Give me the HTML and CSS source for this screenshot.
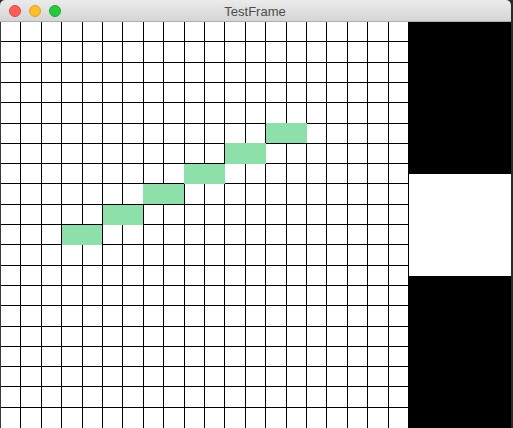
FILE: index.html
```html
<!DOCTYPE html>
<html>
<head>
<meta charset="utf-8">
<link rel="stylesheet" href="styles.css">
</head>
<body>
<div class="window">
  <div class="titlebar">
    <div class="lights">
      <span class="light red"></span>
      <span class="light yellow"></span>
      <span class="light green"></span>
    </div>
    <div class="title">TestFrame</div>
  </div>
  <div class="content">
    <svg class="grid" width="408" height="406" viewBox="0 0 408 406" shape-rendering="crispEdges">
      <rect x="0" y="0" width="408" height="406" fill="#ffffff"/>
      <g id="lines" stroke="#000" stroke-width="1"></g>
      <g fill="#8de0a9">
        <rect x="62" y="203" width="40" height="20"/>
        <rect x="103" y="183" width="40" height="20"/>
        <rect x="143" y="162" width="41" height="20"/>
        <rect x="184" y="142" width="41" height="20"/>
        <rect x="225" y="121" width="41" height="21"/>
        <rect x="266" y="101" width="41" height="20"/>
      </g>
      <line x1="0.5" y1="0" x2="0.5" y2="406" stroke="#3a3a3a"/>
    </svg>
    <div class="side">
      <div class="slot"></div>
    </div>
  </div>
</div>
<script>
(function () {
  var g = document.getElementById('lines');
  var out = '';
  for (var i = 1; i < 20; i++) {
    var x = Math.round(i * 20.4) + 0.5;
    var y = Math.round(i * 20.3) - 0.5;
    out += '<line x1="' + x + '" y1="0" x2="' + x + '" y2="406"/>';
    out += '<line x1="0" y1="' + y + '" x2="408" y2="' + y + '"/>';
  }
  g.innerHTML = out;
})();
</script>
</body>
</html>
```
FILE: styles.css
```css
html, body {
  margin: 0;
  padding: 0;
}
body {
  background: #2a2a2a;
  width: 513px;
  height: 428px;
  overflow: hidden;
}
.window {
  width: 511px;
  height: 428px;
  display: flex;
  flex-direction: column;
  border-radius: 5px 5px 0 0;
  overflow: hidden;
  background: #000;
}
.titlebar {
  height: 21px;
  border-bottom: 1px solid #b1b1b1;
  background: linear-gradient(#ebebeb, #d5d5d5);
  position: relative;
  display: flex;
  align-items: center;
  justify-content: center;
  flex: none;
}
.lights {
  position: absolute;
  left: 9px;
  top: 5px;
  display: flex;
  gap: 8px;
}
.light {
  width: 12px;
  height: 12px;
  border-radius: 50%;
  box-sizing: border-box;
}
.red { background: #fc5f57; border: 1px solid #e0443e; }
.yellow { background: #fdbc2e; border: 1px solid #dea123; }
.green { background: #28c840; border: 1px solid #1aab29; }
.title {
  font-family: "Liberation Sans", Arial, sans-serif;
  font-size: 13px;
  color: #4c4c4c;
  margin-left: -1px;
  margin-top: 1px;
}
.content {
  display: flex;
  flex: 1;
}
.grid {
  display: block;
  flex: none;
}
.side {
  flex: 1;
  background: #000;
  padding-top: 152px;
}
.slot {
  height: 102px;
  background: #fff;
  margin-left: 1px;
}
```
